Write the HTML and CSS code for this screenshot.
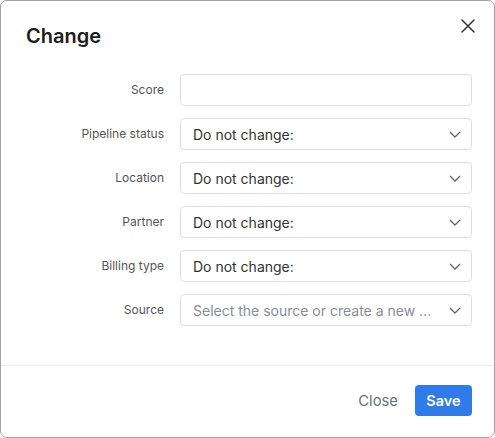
FILE: index.html
```html
<!DOCTYPE html>
<html>
<head>
<meta charset="utf-8">
<link rel="stylesheet" href="styles.css">
</head>
<body>
<div class="dialog">
  <div class="header">
    <h1 class="title">Change</h1>
    <button class="close-x" aria-label="Close">
      <svg width="14" height="14" viewBox="0 0 14 14"><path d="M1 1L13 13M13 1L1 13" stroke="#333" stroke-width="1.5" fill="none" stroke-linecap="round"/></svg>
    </button>
  </div>
  <div class="form">
    <div class="row">
      <label class="label">Score</label>
      <div class="field"></div>
    </div>
    <div class="row">
      <label class="label">Pipeline status</label>
      <div class="field select"><span class="value">Do not change:</span><svg class="chev" width="12" height="7" viewBox="0 0 12 7"><path d="M1 1L6 6L11 1" stroke="#666" stroke-width="1.3" fill="none"/></svg></div>
    </div>
    <div class="row">
      <label class="label">Location</label>
      <div class="field select"><span class="value">Do not change:</span><svg class="chev" width="12" height="7" viewBox="0 0 12 7"><path d="M1 1L6 6L11 1" stroke="#666" stroke-width="1.3" fill="none"/></svg></div>
    </div>
    <div class="row">
      <label class="label">Partner</label>
      <div class="field select"><span class="value">Do not change:</span><svg class="chev" width="12" height="7" viewBox="0 0 12 7"><path d="M1 1L6 6L11 1" stroke="#666" stroke-width="1.3" fill="none"/></svg></div>
    </div>
    <div class="row">
      <label class="label">Billing type</label>
      <div class="field select"><span class="value">Do not change:</span><svg class="chev" width="12" height="7" viewBox="0 0 12 7"><path d="M1 1L6 6L11 1" stroke="#666" stroke-width="1.3" fill="none"/></svg></div>
    </div>
    <div class="row">
      <label class="label">Source</label>
      <div class="field select"><span class="value placeholder">Select the source or create a new ...</span><svg class="chev" width="12" height="7" viewBox="0 0 12 7"><path d="M1 1L6 6L11 1" stroke="#666" stroke-width="1.3" fill="none"/></svg></div>
    </div>
  </div>
  <div class="footer">
    <button class="btn-close">Close</button>
    <button class="btn-save">Save</button>
  </div>
</div>
</body>
</html>
```
FILE: styles.css
```css
html, body {
  margin: 0;
  padding: 0;
  background: #ffffff;
}
body {
  font-family: Inter, "Noto Sans", sans-serif;
  color: #222;
}
.dialog {
  box-sizing: border-box;
  width: 495px;
  height: 438px;
  border: 1px solid #a3a3a3;
  border-radius: 7px;
  background: #fff;
  display: flex;
  flex-direction: column;
}
.header {
  display: flex;
  justify-content: space-between;
  align-items: flex-start;
  padding: 0 19px 0 25px;
  height: 73px;
}
.title {
  margin: 23px 0 0 0;
  font-size: 20px;
  font-weight: 600;
  color: #1c1c1c;
}
.close-x {
  margin-top: 18px;
  padding: 0;
  border: 0;
  background: none;
  width: 14px;
  height: 14px;
  display: flex;
}
.form {
  display: flex;
  flex-direction: column;
  gap: 12px;
  padding-right: 22px;
  flex: 1;
}
.row {
  display: grid;
  grid-template-columns: 163px 1fr;
  column-gap: 16px;
  align-items: center;
}
.label {
  text-align: right;
  font-size: 12px;
  color: #555;
  position: relative;
  top: -1px;
}
.field {
  box-sizing: border-box;
  height: 32px;
  border: 1px solid #dcdfe4;
  border-radius: 4px;
  display: flex;
  align-items: center;
  padding: 0 10px 0 12px;
}
.select {
  justify-content: space-between;
}
.value {
  font-size: 14px;
  color: #333;
}
.placeholder {
  color: #8a8d93;
}
.footer {
  border-top: 1px solid #eeeeee;
  height: 72px;
  box-sizing: border-box;
  display: flex;
  justify-content: flex-end;
  align-items: center;
  padding: 0 22px 2px 0;
  gap: 17px;
}
.btn-close {
  border: 0;
  background: none;
  font-family: inherit;
  font-size: 14.8px;
  color: #6b6f76;
  padding: 0;
}
.btn-save {
  border: 0;
  background: #2f7bea;
  color: #fff;
  font-family: inherit;
  font-size: 14.5px;
  font-weight: 600;
  border-radius: 4px;
  width: 57px;
  height: 31px;
}
```
